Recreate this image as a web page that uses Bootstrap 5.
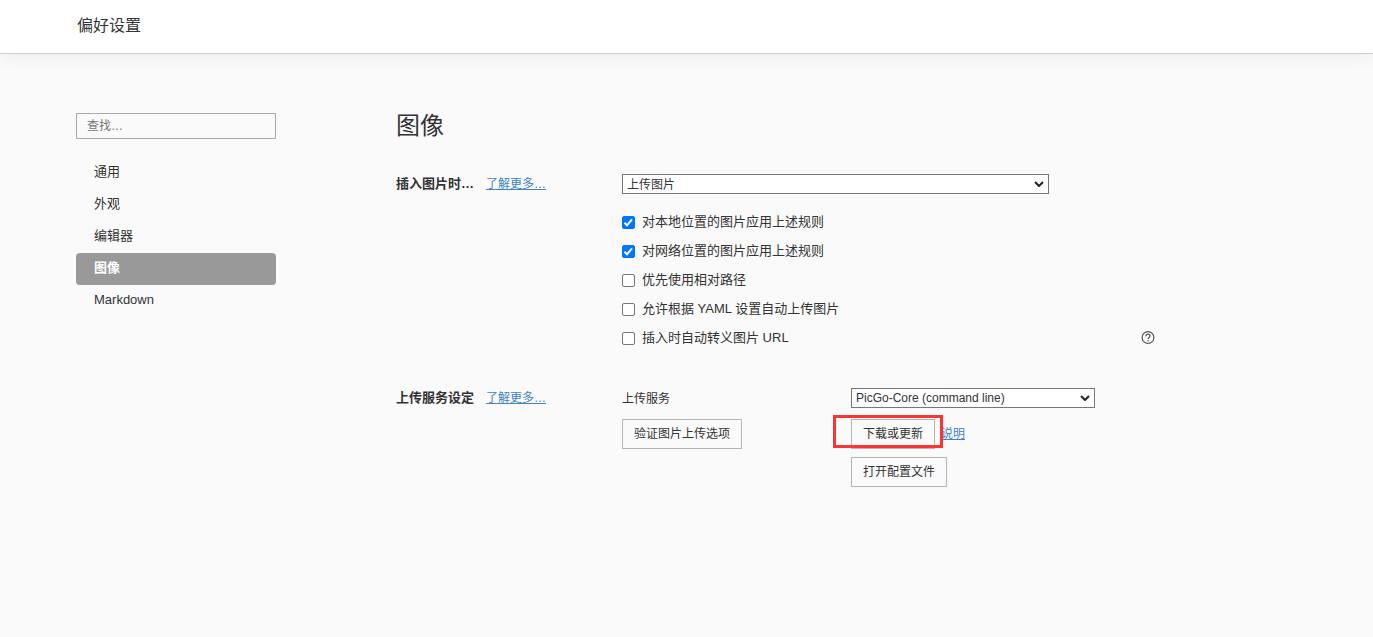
<!DOCTYPE html>
<html lang="zh-CN">
<head>
<meta charset="utf-8">
<meta name="viewport" content="width=device-width, initial-scale=1">
<title>偏好设置</title>
<link href="https://cdn.jsdelivr.net/npm/bootstrap@5.3.0/dist/css/bootstrap.min.css" rel="stylesheet">
<style>
  body { background: #fafafa; color: #333; font-family: "Liberation Sans", "Noto Sans CJK SC", sans-serif; font-size: 13px; line-height: 20px; }
  a { color: #4183c4; font-size: 12px; }
  .topbar { height: 54px; padding: 0 77px 1px; background: #fff; border-bottom: 1px solid #ccc; box-shadow: 0 0 20px rgba(0,0,0,.08); }
  .topbar h1 { font-size: 16px; line-height: 24px; font-weight: 400; }
  .page { padding: 59px 76px; gap: 120px; }
  .sidebar { width: 200px; }
  .search { height: 26px; padding: 0 10px; border: 1px solid #a9a9a9; border-radius: 0; background: transparent; font-size: 12px; }
  .search::placeholder { color: #757575; }
  .menu { margin-top: 18px; }
  .menu .nav-link { height: 32px; padding: 5px 18px; color: #333; font-size: 13px; border-radius: 4px; }
  .menu .nav-link.active { background: #999; color: #fff; font-weight: 700; }
  .title { font-size: 24px; line-height: 36px; margin: -5px 0 30px; font-weight: 400; }
  .caption-col { width: 226px; gap: 12px; }
  .caption-col h3 { font-size: 13px; line-height: 20px; font-weight: 700; }
  .options { max-width: 533px; }
  .picker { height: 20px; padding: 1px 20px 0 4px; border: 1px solid #767676; border-radius: 0; font-size: 12px; line-height: 18px; color: #333;
    background: #fff url("data:image/svg+xml,%3Csvg xmlns='http://www.w3.org/2000/svg' viewBox='0 0 10 6'%3E%3Cpath d='M1 1l4 4 4-4' fill='none' stroke='%23222' stroke-width='2'/%3E%3C/svg%3E") no-repeat right 4px center / 10px 6px; }
  .picker-wide { width: 427px; }
  .picker-service { width: 244px; padding-top: 0; }
  .checks { margin-top: 18px; gap: 9px; }
  .checks .form-check { min-height: 20px; gap: 7px; }
  .checks .form-check-input { width: 13px; height: 13px; border: 1px solid #767676; border-radius: 2px; background-color: #fff; }
  .checks .form-check-input:checked { background-color: #0075ff; border-color: #0075ff;
    background-image: url("data:image/svg+xml,%3Csvg xmlns='http://www.w3.org/2000/svg' viewBox='0 0 11 11'%3E%3Cpath d='M1.500 5.800l2.500 2.500 5-6' fill='none' stroke='%23fff' stroke-width='2'/%3E%3C/svg%3E"); }
  .help { color: #555; }
  .group-upload { margin-top: 40px; }
  .service-col { width: 229px; }
  .service-col label { padding-top: 1px; font-size: 12px; }
  .btn-plain { height: 30px; padding: 1px 11px 0; border: 1px solid #b5b5b5; border-radius: 0; font-size: 12px; line-height: 27px; color: #333; }
  .service-row { margin-bottom: 10px; }
  .actions { gap: 8px; }
  .download-row { gap: 6px; }
  .highlight { position: absolute; inset: -4px -8px 1px -18px; border: 3px solid #fc3434; pointer-events: none; }
</style>
</head>
<body>
<header class="topbar d-flex align-items-center">
  <h1 class="m-0">偏好设置</h1>
</header>
<div class="page d-flex">
  <aside class="sidebar flex-shrink-0">
    <input type="search" class="form-control search" placeholder="查找…" aria-label="查找">
    <nav class="menu nav nav-pills flex-column">
      <a class="nav-link" href="#general">通用</a>
      <a class="nav-link" href="#appearance">外观</a>
      <a class="nav-link" href="#editor">编辑器</a>
      <a class="nav-link active" href="#image" aria-current="page">图像</a>
      <a class="nav-link" href="#markdown">Markdown</a>
    </nav>
  </aside>
  <main class="flex-grow-1">
    <h2 class="title">图像</h2>
    <section class="d-flex">
      <div class="caption-col d-flex flex-shrink-0 align-items-start">
        <h3 class="m-0">插入图片时…</h3>
        <a href="#insert-help">了解更多…</a>
      </div>
      <div class="options flex-grow-1">
        <select class="form-select picker picker-wide" aria-label="插入图片时">
          <option>上传图片</option>
        </select>
        <div class="checks d-flex flex-column">
          <div class="form-check d-flex align-items-center p-0 m-0">
            <input class="form-check-input m-0" type="checkbox" id="local" checked>
            <label for="local">对本地位置的图片应用上述规则</label>
          </div>
          <div class="form-check d-flex align-items-center p-0 m-0">
            <input class="form-check-input m-0" type="checkbox" id="remote" checked>
            <label for="remote">对网络位置的图片应用上述规则</label>
          </div>
          <div class="form-check d-flex align-items-center p-0 m-0">
            <input class="form-check-input m-0" type="checkbox" id="relative">
            <label for="relative">优先使用相对路径</label>
          </div>
          <div class="form-check d-flex align-items-center p-0 m-0">
            <input class="form-check-input m-0" type="checkbox" id="yaml">
            <label for="yaml">允许根据 YAML 设置自动上传图片</label>
          </div>
          <div class="form-check d-flex align-items-center p-0 m-0">
            <input class="form-check-input m-0" type="checkbox" id="escape">
            <label for="escape">插入时自动转义图片 URL</label>
            <svg class="help ms-auto" width="14" height="14" viewBox="0 0 14 14" fill="none" stroke="currentColor" role="img" aria-label="帮助">
              <circle cx="7" cy="6.500" r="5.900" stroke-width="1.200"/>
              <path d="M5 5.200C5 3.900 5.800 3.200 7 3.200s2 .8 2 1.800C9 6.400 7 6.500 7 8" stroke-width="1.200"/>
              <path d="M7 9v1.300" stroke-width="1.300"/>
            </svg>
          </div>
        </div>
      </div>
    </section>
    <section class="group-upload d-flex">
      <div class="caption-col d-flex flex-shrink-0 align-items-start">
        <h3 class="m-0">上传服务设定</h3>
        <a href="#upload-help">了解更多…</a>
      </div>
      <div class="flex-grow-1">
        <div class="service-row d-flex">
          <div class="service-col"><label for="service">上传服务</label></div>
          <select class="form-select picker picker-service" id="service">
            <option>PicGo-Core (command line)</option>
          </select>
        </div>
        <div class="d-flex">
          <div class="service-col"><button type="button" class="btn btn-plain">验证图片上传选项</button></div>
          <div class="actions d-flex flex-column align-items-start">
            <div class="download-row d-flex align-items-center">
              <div class="position-relative">
                <button type="button" class="btn btn-plain">下载或更新</button>
                <span class="highlight"></span>
              </div>
              <a href="#guide">说明</a>
            </div>
            <button type="button" class="btn btn-plain">打开配置文件</button>
          </div>
        </div>
      </div>
    </section>
  </main>
</div>
<script src="https://cdn.jsdelivr.net/npm/bootstrap@5.3.0/dist/js/bootstrap.bundle.min.js"></script>
</body>
</html>
